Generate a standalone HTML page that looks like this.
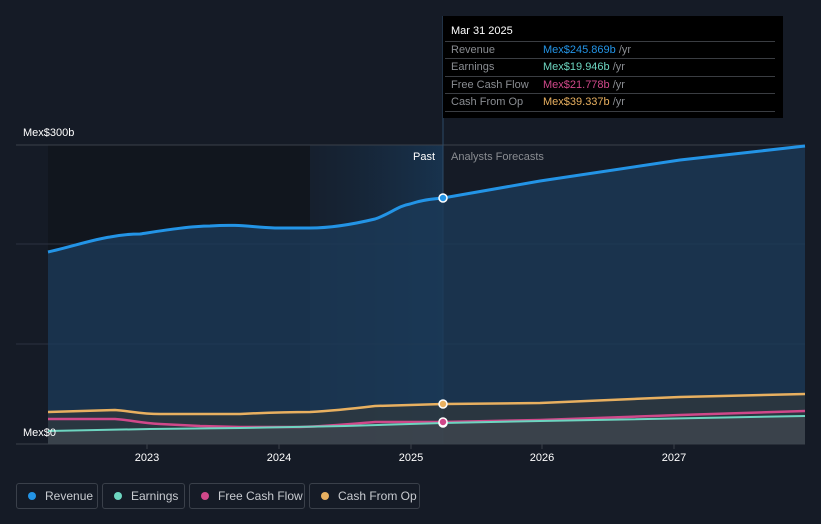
<!DOCTYPE html>
<html><head><meta charset="utf-8"><style>
body{margin:0;background:#151b26;font-family:"Liberation Sans",sans-serif;}
.wrap{position:relative;width:821px;height:524px;overflow:hidden;background:#151b26}
.tip{position:absolute;left:443px;top:16px;width:340px;height:102px;background:#000;color:#fff;font-size:11px}
.tip .h{position:absolute;left:8px;top:9px;font-size:11px}
.row{position:absolute;left:2px;width:330px;height:17px;border-top:1px solid #3a3d42;color:#8a8d92}
.row span{position:absolute;top:2px}
.lg{position:absolute;top:483px;height:26px;border:1px solid #3a404a;border-radius:3px;color:#c8cbd0;font-size:12px;box-sizing:border-box}
.lg i{position:absolute;left:11px;top:8px;width:8px;height:8px;border-radius:50%}
.lg span{position:absolute;left:28px;top:5px}
</style></head><body><div class="wrap">
<svg width="821" height="524" style="position:absolute;left:0;top:0">
<defs><linearGradient id="hl" x1="0" x2="1"><stop offset="0" stop-color="#1a3a5a" stop-opacity="0.15"/><stop offset="1" stop-color="#1a4a75" stop-opacity="0.5"/></linearGradient></defs>
<rect x="48" y="145" width="262" height="299" fill="#11161e"/>
<rect x="310" y="145" width="133" height="299" fill="url(#hl)"/>
<line x1="16" y1="145" x2="805" y2="145" stroke="#3a404a"/>
<line x1="16" y1="244" x2="805" y2="244" stroke="#2a3240"/>
<line x1="16" y1="344" x2="805" y2="344" stroke="#2a3240"/>
<line x1="16" y1="444" x2="805" y2="444" stroke="#3a404a"/>
<line x1="443" y1="16" x2="443" y2="444" stroke="#2c4a66"/>
<path d="M48,252 C70,247 95,239 110,237 C125,234 135,234 140,234 C160,231 190,226 210,226 C240,224 250,227 275,228 L310,228 C330,228 350,225 375,219 C390,214 398,206 410,204 C425,199 435,199 443,198 L540,181 L680,160 L805,146 L805,444 L48,444 Z" fill="#1b3a57" fill-opacity="0.8"/>
<path d="M48,412 L115,410 L150,414 L240,414 L310,412 L345,410 L375,406 L443,404 L540,403 L680,397 L805,394 L805,444 L48,444Z" fill="#3a3a34" fill-opacity="0.5"/>
<path d="M48,431 L150,429 L240,428 L345,426 L443,423 L540,421 L805,416 L805,444 L48,444Z" fill="#4a4e55" fill-opacity="0.5"/>
<path d="M48,252 C70,247 95,239 110,237 C125,234 135,234 140,234 C160,231 190,226 210,226 C240,224 250,227 275,228 L310,228 C330,228 350,225 375,219 C390,214 398,206 410,204 C425,199 435,199 443,198 L540,181 L680,160 L805,146" fill="none" stroke="#2394e6" stroke-width="3"/>
<path d="M48,412 L115,410 C130,411 140,414 160,414 L240,414 C260,413 290,412 310,412 C330,411 350,409 375,406 L443,404 L540,403 L680,397 L805,394" fill="none" stroke="#e8b060" stroke-width="2.5"/>
<path d="M48,419 L115,419 C130,420 140,423 160,424 L200,426 L240,427 L300,427 C330,426 350,424 375,422 L443,422 L540,420 L680,415 L805,411" fill="none" stroke="#d0488a" stroke-width="2.5"/>
<path d="M48,431 L150,429 L240,428 L345,426 L443,423 L540,421 L805,416" fill="none" stroke="#6dd5c0" stroke-width="2"/>
<circle cx="443" cy="198" r="4" fill="#2394e6" stroke="#fff" stroke-width="1.5"/>
<circle cx="443" cy="404" r="4" fill="#e8b060" stroke="#fff" stroke-width="1.5"/>
<circle cx="443" cy="423" r="4" fill="#6dd5c0" stroke="#fff" stroke-width="1.5"/>
<circle cx="443" cy="422" r="4" fill="#d0488a" stroke="#fff" stroke-width="1.5"/>
<g stroke="#3a404a"><line x1="147" y1="444" x2="147" y2="449"/><line x1="279" y1="444" x2="279" y2="449"/><line x1="411" y1="444" x2="411" y2="449"/><line x1="542" y1="444" x2="542" y2="449"/><line x1="674" y1="444" x2="674" y2="449"/></g>
<g fill="#fff" font-size="11" font-family="Liberation Sans" text-anchor="middle"><text x="147" y="461">2023</text><text x="279" y="461">2024</text><text x="411" y="461">2025</text><text x="542" y="461">2026</text><text x="674" y="461">2027</text></g>
<text x="23" y="136" fill="#fff" font-size="11" font-family="Liberation Sans">Mex$300b</text>
<text x="23" y="436" fill="#fff" font-size="11" font-family="Liberation Sans">Mex$0</text>
<text x="435" y="160" fill="#fff" font-size="11" text-anchor="end" font-family="Liberation Sans">Past</text>
<text x="451" y="160" fill="#8a8d92" font-size="11" font-family="Liberation Sans">Analysts Forecasts</text>
</svg>
<div class="tip"><div class="h">Mar 31 2025</div>
<div class="row" style="top:25px"><span style="left:6px">Revenue</span><span style="left:98px;color:#2394e6">Mex$245.869b <b style="font-weight:normal;color:#8a8d92">/yr</b></span></div>
<div class="row" style="top:42px"><span style="left:6px">Earnings</span><span style="left:98px;color:#6dd5c0">Mex$19.946b <b style="font-weight:normal;color:#8a8d92">/yr</b></span></div>
<div class="row" style="top:60px"><span style="left:6px">Free Cash Flow</span><span style="left:98px;color:#d0488a">Mex$21.778b <b style="font-weight:normal;color:#8a8d92">/yr</b></span></div>
<div class="row" style="top:77px;border-bottom:1px solid #3a3d42"><span style="left:6px">Cash From Op</span><span style="left:98px;color:#e8b060">Mex$39.337b <b style="font-weight:normal;color:#8a8d92">/yr</b></span></div>
</div>
<div class="lg" style="left:16px;width:82px"><i style="background:#2394e6"></i><span>Revenue</span></div>
<div class="lg" style="left:102px;width:83px"><i style="background:#6dd5c0"></i><span>Earnings</span></div>
<div class="lg" style="left:189px;width:116px"><i style="background:#d0488a"></i><span>Free Cash Flow</span></div>
<div class="lg" style="left:309px;width:111px"><i style="background:#e8b060"></i><span>Cash From Op</span></div>
</div></body></html>
